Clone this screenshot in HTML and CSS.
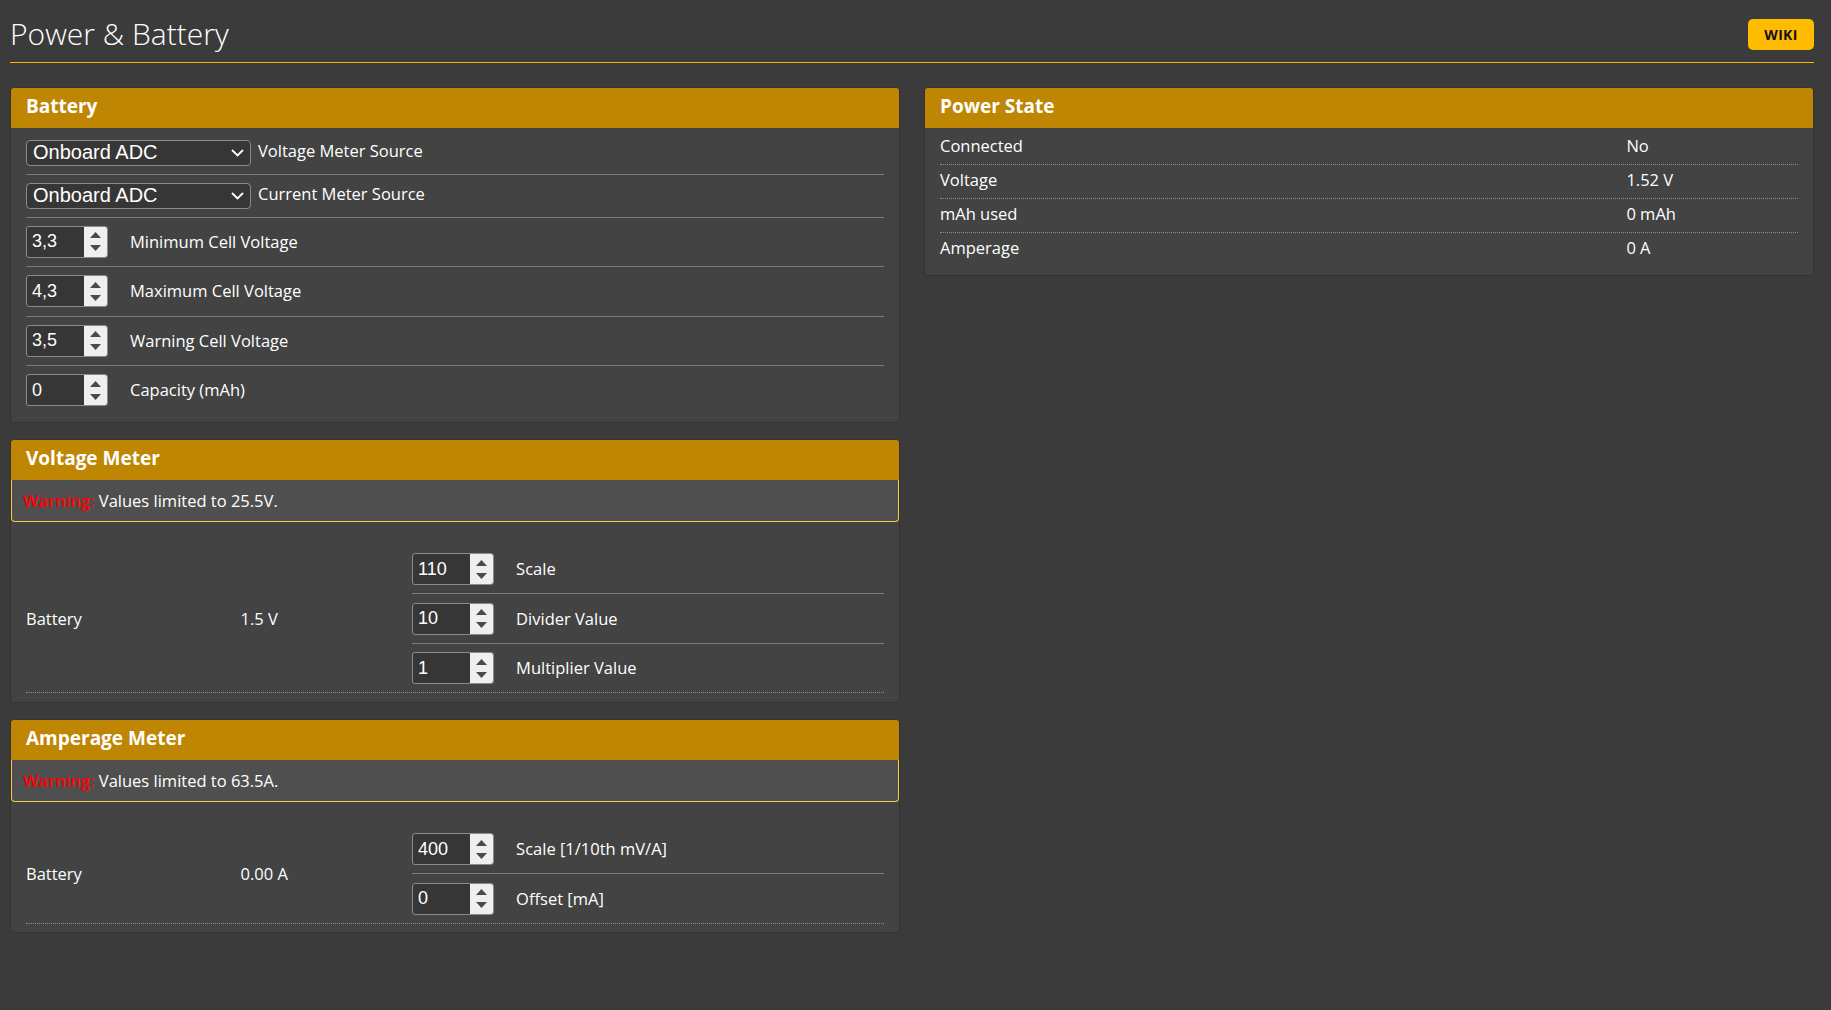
FILE: index.html
```html
<!DOCTYPE html>
<html lang="en">
<head>
<meta charset="utf-8">
<title>Power &amp; Battery</title>
<link rel="stylesheet" href="styles.css">
</head>
<body>
<div class="page">
  <header class="top">
    <h1 class="title">Power &amp; Battery</h1>
    <a class="wiki">WIKI</a>
  </header>

  <main class="columns">
    <div class="col">
      <section class="box">
        <div class="box-head">Battery</div>
        <div class="box-body">
          <div class="row row-select">
            <div class="select"><span>Onboard ADC</span><svg class="chev" width="13" height="8" viewBox="0 0 13 8"><polyline points="1,1 6.5,6.5 12,1" fill="none" stroke="#fff" stroke-width="1.8"/></svg></div>
            <span class="label label-select">Voltage Meter Source</span>
          </div>
          <div class="row row-select">
            <div class="select"><span>Onboard ADC</span><svg class="chev" width="13" height="8" viewBox="0 0 13 8"><polyline points="1,1 6.5,6.5 12,1" fill="none" stroke="#fff" stroke-width="1.8"/></svg></div>
            <span class="label label-select">Current Meter Source</span>
          </div>
          <div class="row row-num">
            <div class="num"><input class="num-input" type="text" value="3,3"><div class="spin"><svg width="11" height="6" viewBox="0 0 11 6"><polygon points="0,6 5.5,0 11,6" fill="#4a4a4a"/></svg><svg width="11" height="6" viewBox="0 0 11 6"><polygon points="0,0 11,0 5.5,6" fill="#4a4a4a"/></svg></div></div>
            <span class="label label-num">Minimum Cell Voltage</span>
          </div>
          <div class="row row-num">
            <div class="num"><input class="num-input" type="text" value="4,3"><div class="spin"><svg width="11" height="6" viewBox="0 0 11 6"><polygon points="0,6 5.5,0 11,6" fill="#4a4a4a"/></svg><svg width="11" height="6" viewBox="0 0 11 6"><polygon points="0,0 11,0 5.5,6" fill="#4a4a4a"/></svg></div></div>
            <span class="label label-num">Maximum Cell Voltage</span>
          </div>
          <div class="row row-num">
            <div class="num"><input class="num-input" type="text" value="3,5"><div class="spin"><svg width="11" height="6" viewBox="0 0 11 6"><polygon points="0,6 5.5,0 11,6" fill="#4a4a4a"/></svg><svg width="11" height="6" viewBox="0 0 11 6"><polygon points="0,0 11,0 5.5,6" fill="#4a4a4a"/></svg></div></div>
            <span class="label label-num">Warning Cell Voltage</span>
          </div>
          <div class="row row-num">
            <div class="num"><input class="num-input" type="text" value="0"><div class="spin"><svg width="11" height="6" viewBox="0 0 11 6"><polygon points="0,6 5.5,0 11,6" fill="#4a4a4a"/></svg><svg width="11" height="6" viewBox="0 0 11 6"><polygon points="0,0 11,0 5.5,6" fill="#4a4a4a"/></svg></div></div>
            <span class="label label-num">Capacity (mAh)</span>
          </div>
        </div>
      </section>

      <section class="box">
        <div class="box-head">Voltage Meter</div>
        <div class="note"><span class="warn">Warning:</span> Values limited to 25.5V.</div>
        <div class="meter-body">
          <div class="meter-row">
            <div class="meter-name">Battery</div>
            <div class="meter-value">1.5 V</div>
            <div class="meter-settings">
              <div class="row row-num">
                <div class="num"><input class="num-input" type="text" value="110"><div class="spin"><svg width="11" height="6" viewBox="0 0 11 6"><polygon points="0,6 5.5,0 11,6" fill="#4a4a4a"/></svg><svg width="11" height="6" viewBox="0 0 11 6"><polygon points="0,0 11,0 5.5,6" fill="#4a4a4a"/></svg></div></div>
                <span class="label label-num">Scale</span>
              </div>
              <div class="row row-num">
                <div class="num"><input class="num-input" type="text" value="10"><div class="spin"><svg width="11" height="6" viewBox="0 0 11 6"><polygon points="0,6 5.5,0 11,6" fill="#4a4a4a"/></svg><svg width="11" height="6" viewBox="0 0 11 6"><polygon points="0,0 11,0 5.5,6" fill="#4a4a4a"/></svg></div></div>
                <span class="label label-num">Divider Value</span>
              </div>
              <div class="row row-num">
                <div class="num"><input class="num-input" type="text" value="1"><div class="spin"><svg width="11" height="6" viewBox="0 0 11 6"><polygon points="0,6 5.5,0 11,6" fill="#4a4a4a"/></svg><svg width="11" height="6" viewBox="0 0 11 6"><polygon points="0,0 11,0 5.5,6" fill="#4a4a4a"/></svg></div></div>
                <span class="label label-num">Multiplier Value</span>
              </div>
            </div>
          </div>
        </div>
      </section>

      <section class="box">
        <div class="box-head">Amperage Meter</div>
        <div class="note"><span class="warn">Warning:</span> Values limited to 63.5A.</div>
        <div class="meter-body">
          <div class="meter-row">
            <div class="meter-name">Battery</div>
            <div class="meter-value">0.00 A</div>
            <div class="meter-settings">
              <div class="row row-num">
                <div class="num"><input class="num-input" type="text" value="400"><div class="spin"><svg width="11" height="6" viewBox="0 0 11 6"><polygon points="0,6 5.5,0 11,6" fill="#4a4a4a"/></svg><svg width="11" height="6" viewBox="0 0 11 6"><polygon points="0,0 11,0 5.5,6" fill="#4a4a4a"/></svg></div></div>
                <span class="label label-num">Scale [1/10th mV/A]</span>
              </div>
              <div class="row row-num">
                <div class="num"><input class="num-input" type="text" value="0"><div class="spin"><svg width="11" height="6" viewBox="0 0 11 6"><polygon points="0,6 5.5,0 11,6" fill="#4a4a4a"/></svg><svg width="11" height="6" viewBox="0 0 11 6"><polygon points="0,0 11,0 5.5,6" fill="#4a4a4a"/></svg></div></div>
                <span class="label label-num">Offset [mA]</span>
              </div>
            </div>
          </div>
        </div>
      </section>
    </div>

    <div class="col">
      <section class="box">
        <div class="box-head">Power State</div>
        <div class="state-body">
          <div class="state-row"><span>Connected</span><span>No</span></div>
          <div class="state-row"><span>Voltage</span><span>1.52 V</span></div>
          <div class="state-row"><span>mAh used</span><span>0 mAh</span></div>
          <div class="state-row"><span>Amperage</span><span>0 A</span></div>
        </div>
      </section>
    </div>
  </main>
</div>
</body>
</html>
```

FILE: styles.css
```css
html, body {
  margin: 0;
  background: #3a3b3a;
}

body {
  font-family: "Open Sans", "Liberation Sans", sans-serif;
  color: #fff;
  font-size: 16.5px;
}

.page {
  padding: 0 17px 30px 10px;
}

.top {
  display: flex;
  justify-content: space-between;
  align-items: flex-start;
  height: 62px;
  border-bottom: 1px solid #f5b400;
}

.title {
  margin: 16px 0 0 0;
  font-size: 30px;
  font-weight: 300;
  line-height: 36px;
}

.wiki {
  margin-top: 19px;
  width: 66px;
  height: 31px;
  border-radius: 5px;
  background: #ffbb00;
  color: #111;
  font-weight: 700;
  font-size: 14px;
  display: flex;
  align-items: center;
  justify-content: center;
  letter-spacing: 0.3px;
}

.columns {
  display: grid;
  grid-template-columns: 1fr 1fr;
  column-gap: 24px;
  margin-top: 24px;
  align-items: start;
}

.col {
  display: flex;
  flex-direction: column;
  gap: 16px;
}

.box {
  background: #424342;
  border: 1px solid #323332;
  border-radius: 4px;
  overflow: hidden;
}

.box-head {
  background: #bf8604;
  height: 40px;
  box-sizing: border-box;
  padding: 0 15px;
  font-size: 19px;
  font-weight: 700;
  line-height: 37px;
}

.box-body {
  padding: 3.5px 15px 7px;
}

.row {
  display: flex;
  align-items: center;
  border-bottom: 1px solid #7b7b7b;
}

.row:last-child {
  border-bottom: none;
}

.row-select {
  padding: 8px 0;
}

.row-num {
  padding: 8px 0 8.5px;
}

.label {
  font-size: 16.5px;
  line-height: 22px;
}

.label-select {
  margin-left: 7px;
  margin-bottom: 4px;
}

.label-num {
  margin-left: 22px;
}

.select {
  width: 225px;
  height: 26px;
  box-sizing: border-box;
  border: 1px solid #8b8b8b;
  border-radius: 4px;
  background: #363636;
  display: flex;
  align-items: center;
  justify-content: space-between;
  padding: 0 6px 0 6px;
  font-family: "Liberation Sans", Arial, sans-serif;
  font-size: 20px;
  flex: none;
}

.chev {
  display: block;
}

.num {
  width: 82px;
  height: 32px;
  box-sizing: border-box;
  border: 1px solid #8b8b8b;
  border-radius: 3px;
  background: #363636;
  display: flex;
  overflow: hidden;
  flex: none;
}

.num-input {
  flex: 1;
  width: 0;
  min-width: 0;
  border: 0;
  background: transparent;
  color: #fff;
  padding: 0 0 0 5px;
  margin: 0;
  font-family: "Liberation Sans", Arial, sans-serif;
  font-size: 18px;
  outline: none;
}

.spin {
  width: 23px;
  background: #efefef;
  display: flex;
  flex-direction: column;
  align-items: center;
  justify-content: center;
  gap: 7px;
}

.spin svg {
  display: block;
}

.note {
  background: #4f4f4f;
  border: 1px solid #f5cd45;
  border-top: none;
  border-radius: 0 0 4px 4px;
  height: 41px;
  line-height: 41px;
  padding: 0 11px;
  font-size: 16.5px;
}

.warn {
  color: #ff0000;
  font-weight: 600;
}

.meter-body {
  padding: 23px 15px 8.5px;
}

.meter-row {
  display: grid;
  grid-template-columns: 25% 20% 55%;
  align-items: center;
  border-bottom: 1px dotted #8c8c8c;
}

.meter-settings .row-num {
  padding: 8.5px 0 8px;
}

.state-body {
  padding: 3px 15px 9px;
}

.state-row {
  display: grid;
  grid-template-columns: 80% 20%;
  padding: 4px 0 8px;
  line-height: 21px;
  font-size: 16.5px;
  border-bottom: 1px dotted #8c8c8c;
}

.state-row:last-child {
  border-bottom: none;
}
```
